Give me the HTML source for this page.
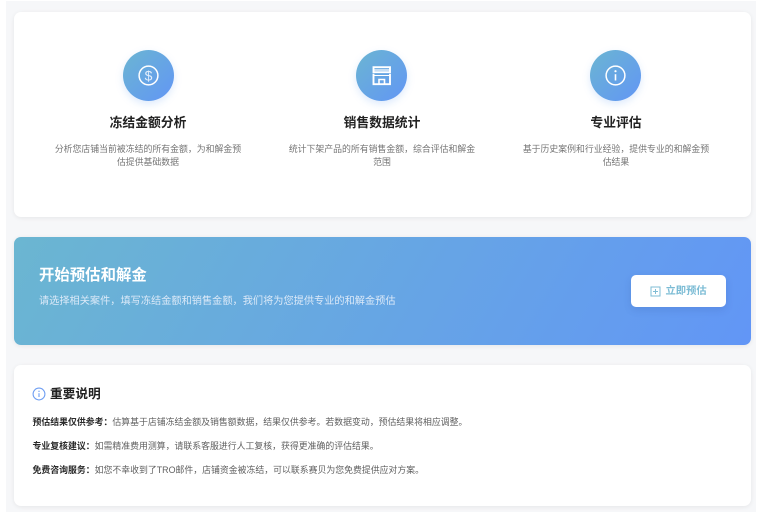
<!DOCTYPE html>
<html lang="zh-CN">
<head>
<meta charset="utf-8">
<style>
html,body{margin:0;padding:0;width:765px;height:517px;overflow:hidden;background:#fff;}
*{box-sizing:border-box;}
body{font-family:"Liberation Sans","Noto Sans CJK SC",sans-serif;position:relative;}
#w{position:absolute;left:0;top:0;width:765px;height:517px;filter:blur(.3px);}
#bg{position:absolute;left:6px;top:1px;width:750px;height:511px;background:#f6f7f9;}
.card{position:absolute;left:14px;width:737px;background:#fff;border-radius:7px;box-shadow:0 1px 5px rgba(0,0,0,.07);}
.abs{position:absolute;white-space:nowrap;}
.circle{position:absolute;top:49.5px;width:51px;height:51px;border-radius:50%;background:linear-gradient(135deg,#6bb5d2,#6296f5);box-shadow:0 3px 8px rgba(100,160,240,.22);}
.circle svg{position:absolute;left:13px;top:13px;width:25px;height:25px;}
.t{top:114px;width:240px;text-align:center;font-size:12.8px;line-height:18px;font-weight:700;color:#222;}
.d{top:142.5px;width:240px;text-align:center;font-size:8.9px;line-height:13.3px;color:#757575;}
.n{left:32.5px;font-size:8.9px;line-height:12px;color:#5f5f5f;}
.n b{color:#2a2a2a;font-weight:700;}
</style>
</head>
<body>
<div id="w">
<div id="bg"></div>

<div class="card" style="top:12px;height:205px;"></div>

<div class="circle" style="left:122.5px;">
<svg viewBox="0 0 25 25" fill="none" stroke="#fff" stroke-width="1.5"><circle cx="12.5" cy="12.5" r="9.4"/><text x="12.5" y="17.5" text-anchor="middle" font-family="Liberation Sans" font-size="14" fill="#e2eefc" stroke="none">$</text></svg>
</div>
<div class="circle" style="left:356px;">
<svg viewBox="0 0 25 25" fill="none" stroke="#fff" stroke-width="1.9"><path d="M4.500 4.200h16.500v5H4.500zM4.500 10.800v10.400h16.500v-10.400"/><path d="M4.500 7h16.500" stroke-width="1.200"/><path d="M10 21v-4.500h5.500v4.500" stroke-width="1.600"/><path d="M4.500 12.500h16.500" stroke-width="1"/></svg>
</div>
<div class="circle" style="left:590px;">
<svg viewBox="0 0 25 25" fill="none" stroke="#fff" stroke-width="1.5"><circle cx="12.500" cy="12.500" r="9.400"/><path d="M12.500 11.200v6.300" stroke-width="1.600"/><circle cx="12.500" cy="8.200" r="1.100" fill="#fff" stroke="none"/></svg>
</div>

<div class="abs t" style="left:28px;">冻结金额分析</div>
<div class="abs t" style="left:262px;">销售数据统计</div>
<div class="abs t" style="left:496px;">专业评估</div>

<div class="abs d" style="left:28px;">分析您店铺当前被冻结的所有金额，为和解金预<br>估提供基础数据</div>
<div class="abs d" style="left:262px;">统计下架产品的所有销售金额，综合评估和解金<br>范围</div>
<div class="abs d" style="left:496px;">基于历史案例和行业经验，提供专业的和解金预<br>估结果</div>

<div class="card" style="top:237px;height:108px;background:linear-gradient(120deg,#6bb6d1 0%,#6296f6 100%);"></div>
<div class="abs" style="left:39px;top:265.500px;font-size:15.400px;line-height:20px;font-weight:700;color:#fff;">开始预估和解金</div>
<div class="abs" style="left:39px;top:295px;font-size:10.200px;line-height:14px;color:#dbe9f8;">请选择相关案件，填写冻结金额和销售金额，我们将为您提供专业的和解金预估</div>

<div class="abs" style="left:631px;top:275px;width:95px;height:32px;background:#fff;border-radius:5px;box-shadow:0 3px 8px rgba(40,70,140,.15);"></div>
<svg class="abs" style="left:650px;top:285.500px;width:11px;height:11px;" viewBox="0 0 11 11" fill="none" stroke="#7fbcd4" stroke-width="1"><rect x="1" y="1" width="9" height="9"/><path d="M3 5.500h5M5.500 3v5"/></svg>
<div class="abs" style="left:665.500px;top:284.500px;font-size:10.300px;line-height:14px;font-weight:700;color:#7cbcd5;">立即预估</div>

<div class="card" style="top:365px;height:141px;"></div>
<svg class="abs" style="left:32px;top:387px;width:14px;height:14px;" viewBox="0 0 14 14" fill="none" stroke="#6d9df2" stroke-width="1.100"><circle cx="7" cy="7" r="5.900"/><path d="M7 6.200v3.800"/><circle cx="7" cy="4.300" r=".7" fill="#6d9df2" stroke="none"/></svg>
<div class="abs" style="left:50px;top:385px;font-size:12.700px;line-height:18px;font-weight:700;color:#222;">重要说明</div>

<div class="abs n" style="top:415.500px;"><b>预估结果仅供参考：</b>估算基于店铺冻结金额及销售额数据，结果仅供参考。若数据变动，预估结果将相应调整。</div>
<div class="abs n" style="top:440px;"><b>专业复核建议：</b>如需精准费用测算，请联系客服进行人工复核，获得更准确的评估结果。</div>
<div class="abs n" style="top:464px;"><b>免费咨询服务：</b>如您不幸收到了TRO邮件，店铺资金被冻结，可以联系赛贝为您免费提供应对方案。</div>
</div>
</body>
</html>
